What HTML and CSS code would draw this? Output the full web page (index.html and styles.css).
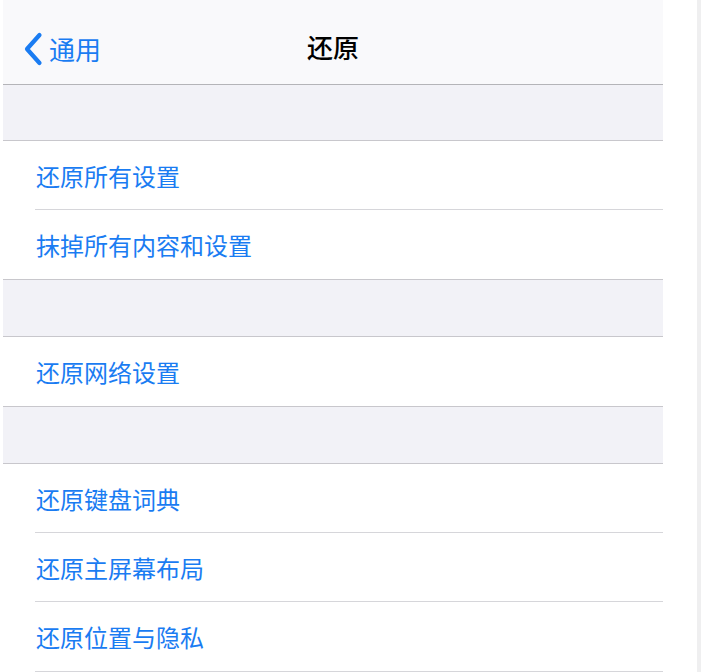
FILE: index.html
```html
<!DOCTYPE html>
<html lang="zh">
<head>
<meta charset="utf-8">
<title>还原</title>
<link rel="stylesheet" href="styles.css">
</head>
<body>
<div class="page">
  <div class="panel">
    <header class="nav">
      <a class="back">
        <svg class="chev" width="22" height="34" viewBox="0 0 22 34"><path d="M17.5 3 L5 17 L17.5 31" fill="none" stroke="#1a7cf2" stroke-width="4.2" stroke-linecap="round" stroke-linejoin="round"/></svg>
        <span class="back-label">通用</span>
      </a>
      <div class="title">还原</div>
    </header>
    <div class="gap"></div>
    <div class="group">
      <div class="row"><span>还原所有设置</span></div>
      <div class="row"><span>抹掉所有内容和设置</span></div>
    </div>
    <div class="gap"></div>
    <div class="group">
      <div class="row"><span>还原网络设置</span></div>
    </div>
    <div class="gap"></div>
    <div class="group">
      <div class="row"><span>还原键盘词典</span></div>
      <div class="row"><span>还原主屏幕布局</span></div>
      <div class="row"><span>还原位置与隐私</span></div>
    </div>
  </div>
  <div class="spacer"></div>
  <div class="edge"></div>
</div>
</body>
</html>
```

FILE: styles.css
```css
html, body {
  margin: 0;
  padding: 0;
  background: #ffffff;
  font-family: "Noto Sans CJK SC", "Noto Sans", sans-serif;
}
* {
  box-sizing: border-box;
}
.page {
  display: flex;
  height: 672px;
  overflow: hidden;
}
.panel {
  width: 660px;
  margin-left: 3px;
  background: #ffffff;
}
.spacer {
  flex: 1;
}
.edge {
  width: 4px;
  background: #efeff0;
}
.nav {
  position: relative;
  height: 85px;
  background: #f9f9fb;
  border-bottom: 1px solid #b4b4b8;
  display: flex;
  align-items: center;
  justify-content: center;
}
.back {
  position: absolute;
  left: 19px;
  top: 32px;
  display: flex;
  align-items: center;
  gap: 5px;
  color: #1a7cf2;
}
.chev {
  display: block;
}
.back-label {
  font-size: 26px;
  line-height: 34px;
}
.title {
  font-size: 26px;
  font-weight: 500;
  color: #000;
  line-height: 34px;
  padding-top: 10px;
}
.gap {
  height: 57px;
  background: #f2f2f7;
  border-bottom: 1px solid #c8c7cc;
}
.nav + .gap {
  height: 56px;
}
.group {
  background: #ffffff;
  border-bottom: 1px solid #c8c7cc;
}
.row {
  height: 69px;
  margin-left: 32px;
  display: flex;
  align-items: center;
  border-bottom: 1px solid #d6d6da;
  color: #1a7cf2;
  font-size: 24px;
}
.row span {
  margin-left: 1px;
}
.row:last-child {
  border-bottom: none;
}
.group:last-child {
  border-bottom: none;
}
.group:last-child .row:last-child {
  height: 70px;
  border-bottom: 1px solid #d6d6da;
}
```
